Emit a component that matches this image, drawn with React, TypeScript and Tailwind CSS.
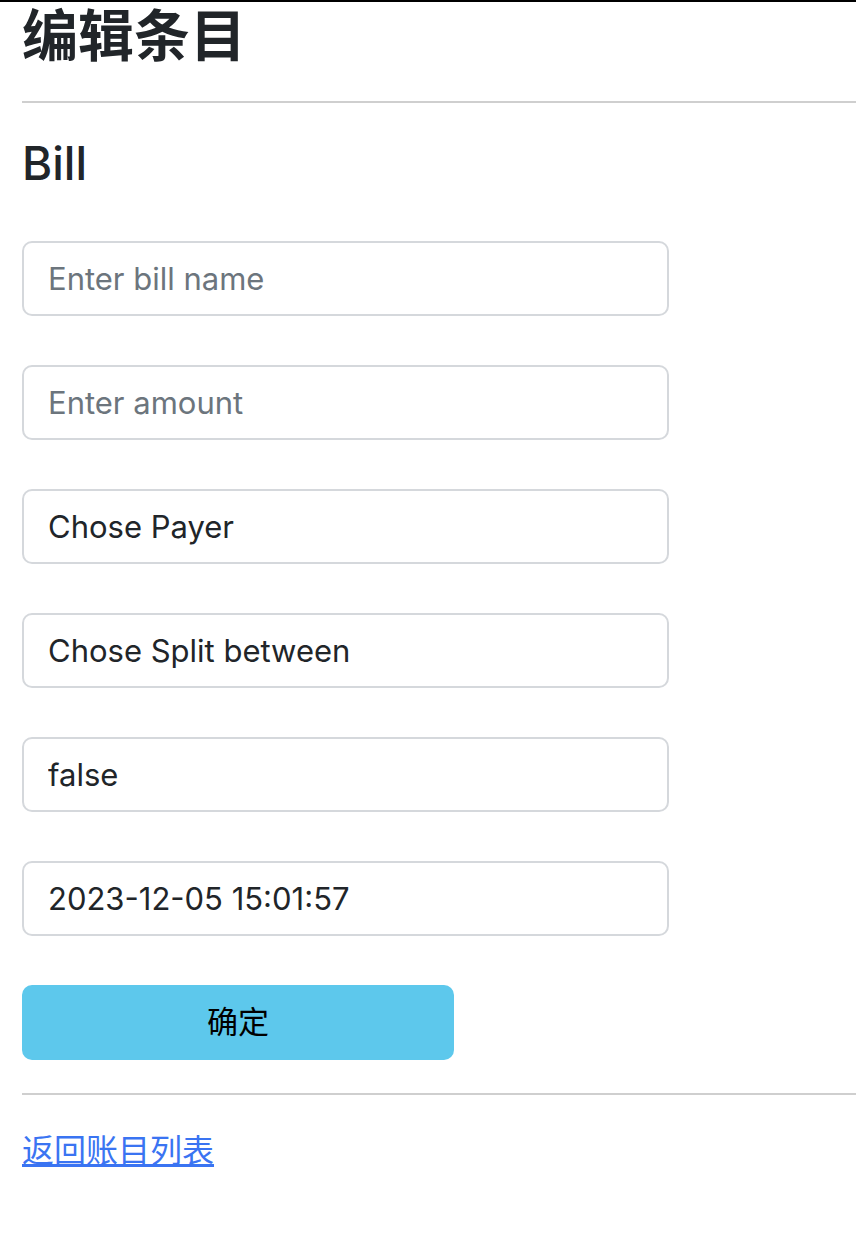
import { useState } from 'react';

const fields = [
  { key: 'name', placeholder: 'Enter bill name', value: '' },
  { key: 'amount', placeholder: 'Enter amount', value: '' },
  { key: 'payer', placeholder: '', value: 'Chose Payer' },
  { key: 'split', placeholder: '', value: 'Chose Split between' },
  { key: 'settled', placeholder: '', value: 'false' },
  { key: 'date', placeholder: '', value: '2023-12-05 15:01:57' },
];

export default function App() {
  const [values, setValues] = useState<Record<string, string>>(
    Object.fromEntries(fields.map((f) => [f.key, f.value])),
  );

  return (
    <div className="min-h-[1254px] w-[856px] overflow-hidden bg-white font-['Inter','Noto_Sans_CJK_SC',sans-serif] text-[#212529]">
      <div className="h-[2px] bg-black" />
      <div className="pl-[22px]">
        <h1 className="mt-[1px] text-[56px] font-bold leading-[66px]">编辑条目</h1>
        <hr className="mt-[32px] border-t-2 border-[#cfcfcf]" />
        <h3 className="mt-[33px] text-[46px] font-medium leading-[55px]">Bill</h3>

        <form className="mt-[50px] flex flex-col gap-[49px]" onSubmit={(e) => e.preventDefault()}>
          {fields.map((field) => (
            <input
              className="h-[75px] w-[647px] rounded-[10px] border-2 border-[#d5d8dc] bg-white px-[24px] text-[31px] text-[#212529] outline-none placeholder:text-[#6c757d]"
              key={field.key}
              onChange={(e) => setValues({ ...values, [field.key]: e.target.value })}
              placeholder={field.placeholder}
              value={values[field.key]}
            />
          ))}
          <button
            className="h-[75px] w-[432px] rounded-[10px] bg-[#5dc8ec] text-[31px] text-black"
            type="submit"
          >
            确定
          </button>
        </form>

        <hr className="mt-[33px] border-t-2 border-[#cfcfcf]" />
        <a className="mt-[33px] inline-block text-[32px] leading-[46px] text-[#3a74f2] underline" href="#">
          返回账目列表
        </a>
      </div>
    </div>
  );
}
